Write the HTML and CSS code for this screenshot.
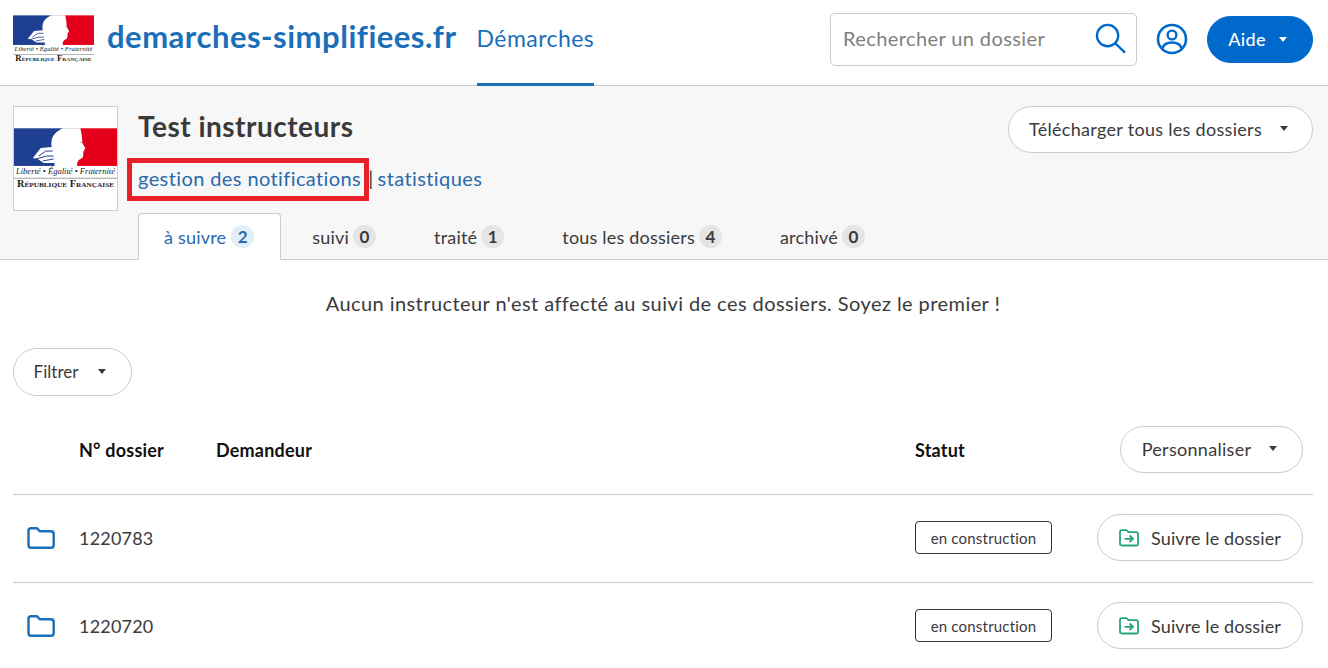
FILE: index.html
```html
<!DOCTYPE html>
<html lang="fr">
<head>
    <meta charset="UTF-8">
    <meta name="viewport" content="width=device-width, initial-scale=1.0">
    <title>Test instructeurs</title>
    <link rel="stylesheet" href="styles.css">
</head>
<body>
    <header class="topbar">
        <svg class="logo-small" viewBox="0 0 104 62">
            <rect x="0" y="0" width="60" height="38" fill="#1f3f92"/>
            <rect x="60" y="0" width="44" height="38" fill="#e4001b"/>
            <path d="M49 0C43 3 39 7 38 12C37 18 39 22 40 26L41 38H64C63 35 65 32 67 31C69 31 70 29 70 26L70 24L72 20L69 15C69 9 68 4 67 0Z" fill="#fff"/>
            <path d="M19 30L27 20L38 19L41 26V35H30L24 31Z" fill="#fff"/>
            <path d="M25 28L32 23L39 23M22 31L33 28L40 28M29 33L40 31" stroke="#1f3f92" stroke-width="1" fill="none"/>
            <path d="M67 14L70 15" stroke="#888" stroke-width="0.8" fill="none"/>
            <text x="52" y="46" class="logo-motto" textLength="100" lengthAdjust="spacingAndGlyphs">Liberté • Égalité • Fraternité</text>
            <rect x="0" y="50" width="104" height="0.7" fill="#777"/>
            <text x="52" y="59" class="logo-name" textLength="98" lengthAdjust="spacingAndGlyphs">République Française</text>
        </svg>
        <a class="brand" href="#">demarches-simplifiees.fr</a>
        <nav class="main-nav"><a class="nav-link" href="#">Démarches</a></nav>
        <form class="search">
            <span class="search-text">Rechercher un dossier</span>
            <svg class="search-icon" viewBox="0 0 32 32" width="31" height="31">
                <circle cx="13" cy="13" r="11" fill="none" stroke="#0069cc" stroke-width="2.4"/>
                <path d="M21 21L31 30.500" stroke="#0069cc" stroke-width="2.400" fill="none"/>
            </svg>
        </form>
        <svg class="user-icon" viewBox="0 0 32 32" width="32" height="32">
            <circle cx="16" cy="16" r="14" fill="none" stroke="#0069cc" stroke-width="2.600"/>
            <circle cx="16" cy="12" r="4.400" fill="none" stroke="#0069cc" stroke-width="2.400"/>
            <path d="M6.500 25C8 20.500 11 19.500 16 19.500C21 19.500 24 20.500 25.500 25" fill="none" stroke="#0069cc" stroke-width="2.400"/>
        </svg>
        <a class="btn btn-primary" href="#">Aide<span class="caret"></span></a>
    </header>

    <section class="procedure">
        <div class="procedure-logo">
            <svg class="logo-large" viewBox="0 0 104 62">
                <rect x="0" y="0" width="60" height="38" fill="#1f3f92"/>
                <rect x="60" y="0" width="44" height="38" fill="#e4001b"/>
                <path d="M49 0C43 3 39 7 38 12C37 18 39 22 40 26L41 38H64C63 35 65 32 67 31C69 31 70 29 70 26L70 24L72 20L69 15C69 9 68 4 67 0Z" fill="#fff"/>
                <path d="M19 30L27 20L38 19L41 26V35H30L24 31Z" fill="#fff"/>
                <path d="M25 28L32 23L39 23M22 31L33 28L40 28M29 33L40 31" stroke="#1f3f92" stroke-width="1" fill="none"/>
                <path d="M67 14L70 15" stroke="#888" stroke-width="0.8" fill="none"/>
                <text x="52" y="46" class="logo-motto" textLength="100" lengthAdjust="spacingAndGlyphs">Liberté • Égalité • Fraternité</text>
                <rect x="0" y="50" width="104" height="0.7" fill="#777"/>
                <text x="52" y="59" class="logo-name" textLength="98" lengthAdjust="spacingAndGlyphs">République Française</text>
            </svg>
        </div>
        <div class="procedure-main">
            <div class="procedure-top">
                <div>
                    <h1 class="procedure-title">Test instructeurs</h1>
                    <p class="procedure-links">
                        <a href="#" class="highlighted">gestion des notifications</a><span class="sep">|</span><a href="#">statistiques</a>
                    </p>
                </div>
                <a class="btn btn-caret btn-download" href="#">Télécharger tous les dossiers<span class="caret"></span></a>
            </div>
            <ul class="tabs">
                <li class="tab active">à suivre <span class="badge">2</span></li>
                <li class="tab">suivi <span class="badge">0</span></li>
                <li class="tab">traité <span class="badge">1</span></li>
                <li class="tab">tous les dossiers <span class="badge">4</span></li>
                <li class="tab">archivé <span class="badge">0</span></li>
            </ul>
        </div>
    </section>

    <main class="content">
        <p class="notice">Aucun instructeur n'est affecté au suivi de ces dossiers. Soyez le premier !</p>
        <a class="btn btn-caret btn-filter" href="#">Filtrer<span class="caret"></span></a>

        <div class="table-row table-head">
            <span></span>
            <span>N° dossier</span>
            <span>Demandeur</span>
            <span>Statut</span>
            <a class="btn btn-caret btn-custom" href="#">Personnaliser<span class="caret"></span></a>
        </div>

        <div class="table-row">
            <svg class="folder" viewBox="0 0 28 22" width="28" height="22">
                <path d="M1.500 4C1.500 2.500 2.500 1.300 4 1.300H10L13 4.300H24C25.500 4.300 26.700 5.500 26.700 7V18C26.700 19.500 25.500 20.700 24 20.700H4C2.500 20.700 1.500 19.500 1.500 18Z" fill="none" stroke="#1a6fb8" stroke-width="2.400" stroke-linejoin="round"/>
            </svg>
            <span>1220783</span>
            <span></span>
            <span><span class="status">en construction</span></span>
            <a class="btn btn-follow" href="#">
                <svg class="follow-icon" viewBox="0 0 20 18" width="20" height="18">
                    <path d="M1 3C1 2 1.700 1.200 2.700 1.200H7.500L9.500 3.200H17.300C18.300 3.200 19 4 19 5V14.700C19 15.700 18.300 16.500 17.300 16.500H2.700C1.700 16.500 1 15.700 1 14.700Z" fill="none" stroke="#27a37a" stroke-width="1.800" stroke-linejoin="round"/>
                    <path d="M5.500 9.800H14M10.500 6.500L14 9.800L10.500 13" fill="none" stroke="#27a37a" stroke-width="1.800"/>
                </svg>
                Suivre le dossier
            </a>
        </div>

        <div class="table-row">
            <svg class="folder" viewBox="0 0 28 22" width="28" height="22">
                <path d="M1.500 4C1.500 2.500 2.500 1.300 4 1.300H10L13 4.300H24C25.500 4.300 26.700 5.500 26.700 7V18C26.700 19.500 25.500 20.700 24 20.700H4C2.500 20.700 1.500 19.500 1.500 18Z" fill="none" stroke="#1a6fb8" stroke-width="2.400" stroke-linejoin="round"/>
            </svg>
            <span>1220720</span>
            <span></span>
            <span><span class="status">en construction</span></span>
            <a class="btn btn-follow" href="#">
                <svg class="follow-icon" viewBox="0 0 20 18" width="20" height="18">
                    <path d="M1 3C1 2 1.700 1.200 2.700 1.200H7.500L9.500 3.200H17.300C18.300 3.200 19 4 19 5V14.700C19 15.700 18.300 16.500 17.300 16.500H2.700C1.700 16.500 1 15.700 1 14.700Z" fill="none" stroke="#27a37a" stroke-width="1.800" stroke-linejoin="round"/>
                    <path d="M5.500 9.800H14M10.500 6.500L14 9.800L10.500 13" fill="none" stroke="#27a37a" stroke-width="1.800"/>
                </svg>
                Suivre le dossier
            </a>
        </div>
    </main>
</body>
</html>
```

FILE: styles.css
```css
* {
    box-sizing: border-box;
}

html, body {
    height: 668px;
    overflow: hidden;
}

body {
    margin: 0;
    font-family: Lato, "Open Sans", sans-serif;
    color: #3a3a3a;
    background-color: #fff;
}

a {
    text-decoration: none;
    color: inherit;
}

.logo-motto {
    font-family: "Liberation Serif", serif;
    font-style: italic;
    font-size: 8px;
    text-anchor: middle;
    fill: #222;
}

.logo-name {
    font-family: "Liberation Serif", serif;
    font-weight: bold;
    font-variant: small-caps;
    font-size: 10px;
    text-anchor: middle;
    fill: #222;
}

.topbar {
    display: flex;
    align-items: center;
    height: 86px;
    padding: 0 15px 0 13px;
    border-bottom: 1px solid #ccc;
}

.logo-small {
    width: 81px;
    height: 49px;
    margin-top: -6px;
}

.brand {
    margin-left: 13px;
    margin-top: -14px;
    font-size: 31px;
    font-weight: 700;
    color: #1a6fb8;
    letter-spacing: 0.5px;
}

.main-nav {
    align-self: stretch;
    display: flex;
    margin-left: 20px;
}

.nav-link {
    display: flex;
    align-items: center;
    padding-bottom: 8px;
    font-size: 23px;
    color: #1a6fb8;
    border-bottom: 3px solid #1a6fb8;
    margin-bottom: -1px;
    letter-spacing: 0.45px;
}

.search {
    display: flex;
    align-items: center;
    justify-content: space-between;
    width: 307px;
    height: 53px;
    margin-left: auto;
    margin-top: -6px;
    padding: 0 10px 0 12px;
    border: 1px solid #ccc;
    border-radius: 5px;
}

.search-text {
    margin-top: -3px;
    font-size: 20px;
    color: #808080;
    letter-spacing: 0.4px;
}

.search-icon {
    margin-top: -2px;
}

.user-icon {
    margin-left: 19px;
    margin-top: -7px;
}

.btn {
    display: inline-flex;
    align-items: center;
    justify-content: center;
    height: 47px;
    border: 1px solid #ccc;
    border-radius: 24px;
    background-color: #fff;
    font-size: 18px;
    letter-spacing: 0.3px;
}

.btn-caret {
    padding-right: 4px;
    padding-bottom: 2px;
}

.caret {
    width: 0;
    height: 0;
    margin-left: 18px;
    border-left: 4px solid transparent;
    border-right: 4px solid transparent;
    border-top: 5px solid currentColor;
}

.btn-primary {
    width: 106px;
    margin-left: 19px;
    margin-top: -7px;
    padding-right: 5px;
    border-color: #0069cc;
    background-color: #0069cc;
    color: #fff;
    font-weight: 500;
}

.btn-primary .caret {
    margin-left: 13px;
}

.procedure {
    display: flex;
    height: 174px;
    padding: 20px 15px 0 13px;
    background-color: #f7f7f7;
    border-bottom: 1px solid #ccc;
}

.procedure-logo {
    width: 105px;
    height: 105px;
    padding: 21px 0 0;
    background-color: #fff;
    border: 1px solid #ccc;
    text-align: center;
}

.logo-large {
    width: 103px;
    height: 62px;
}

.procedure-main {
    flex: 1;
    margin-left: 20px;
    display: flex;
    flex-direction: column;
    justify-content: space-between;
}

.procedure-top {
    display: flex;
    justify-content: space-between;
    align-items: flex-start;
}

.procedure-title {
    margin: 3px 0 0;
    font-size: 28px;
    font-weight: 700;
    letter-spacing: 0.5px;
}

.procedure-links {
    margin: 23px 0 0;
    font-size: 20px;
    letter-spacing: 0.4px;
}

.procedure-links a {
    color: #2a69ac;
}

.sep {
    margin: 0 4px 0 7px;
}

.highlighted {
    position: relative;
}

.highlighted::after {
    content: "";
    position: absolute;
    left: -11px;
    right: -8px;
    top: -8px;
    bottom: -11px;
    border: 5px solid #e8202a;
}

.btn-download {
    width: 305px;
}

.tabs {
    display: flex;
    margin: 0 0 -1px;
    padding: 0;
    list-style: none;
}

.tab {
    display: flex;
    align-items: center;
    gap: 4px;
    height: 47px;
    margin-right: 5px;
    padding: 0 26px 0 25px;
    border: 1px solid transparent;
    font-size: 18px;
    letter-spacing: 0.2px;
}

.tab.active {
    gap: 5px;
    background-color: #fff;
    border-color: #ccc;
    border-bottom-color: #fff;
    border-radius: 4px 4px 0 0;
    color: #2a69ac;
}

.badge {
    display: inline-flex;
    align-items: center;
    justify-content: center;
    width: 23px;
    height: 23px;
    border-radius: 50%;
    background-color: #e5e5e5;
    font-size: 17px;
    font-weight: 700;
}

.tab.active .badge {
    background-color: #e3edf7;
}

.content {
    padding: 0 15px 0 13px;
}

.notice {
    margin: 0;
    height: 88px;
    padding-top: 31px;
    text-align: center;
    font-size: 20px;
    letter-spacing: 0.43px;
}

.btn-filter {
    width: 119px;
    height: 48px;
    padding-right: 5px;
    font-size: 17px;
    letter-spacing: 0;
}

.btn-filter .caret {
    margin-left: 20px;
}

.table-row {
    display: grid;
    grid-template-columns: 66px 137px 699px 182px 206px;
    align-items: center;
    height: 88px;
    padding-bottom: 2px;
    border-bottom: 1px solid #ccc;
    font-size: 18px;
    letter-spacing: 0.2px;
}

.table-head {
    height: 99px;
    padding-top: 10px;
    padding-bottom: 0;
    font-weight: 700;
    color: #111;
}

.table-row:last-child {
    border-bottom-color: transparent;
}

.table-head .btn {
    margin-top: -1px;
    font-weight: 400;
    color: #3a3a3a;
}

.btn-custom {
    width: 183px;
    justify-self: end;
}

.folder {
    margin-left: 14px;
}

.status {
    display: inline-flex;
    align-items: center;
    justify-content: center;
    width: 137px;
    height: 33px;
    border: 1px solid #333;
    border-radius: 4px;
    font-size: 15px;
}

.btn-follow {
    gap: 12px;
    width: 206px;
    letter-spacing: 0.1px;
}
```
